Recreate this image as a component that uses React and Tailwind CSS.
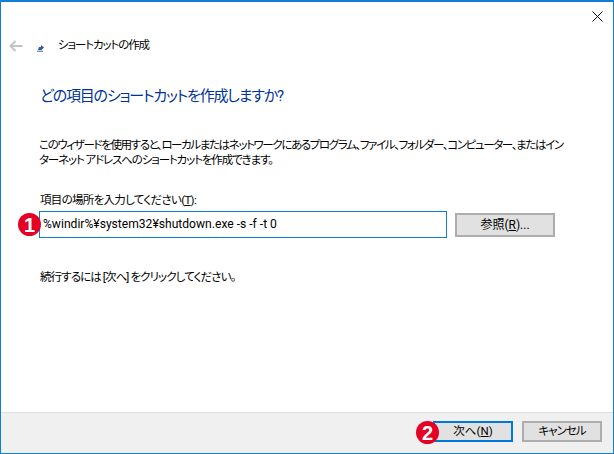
function Badge({ n, className }) {
  return (
    <span className={"absolute flex h-[23px] w-[23px] items-center justify-center rounded-full bg-[#e60023] font-['Liberation_Sans',sans-serif] text-[20px] font-bold leading-none text-white " + className}>
      {n}
    </span>
  );
}

export default function App() {
  return (
    <div className="flex h-[454px] w-[614px] flex-col overflow-hidden border border-t-2 border-[#0f7fd6] bg-white font-['Roboto','Noto_Sans_CJK_JP',sans-serif] text-[11.500px] text-black [font-feature-settings:'palt']">
      <div className="flex h-[28px] shrink-0 items-center justify-end pr-[10px]">
        <svg width="11" height="11" viewBox="0 0 11 11" className="mt-[1px]">
          <path d="M.5.5l10 10M10.500.5l-10 10" stroke="#111" strokeWidth="1" fill="none" />
        </svg>
      </div>
      <div className="flex h-[32px] shrink-0 items-center pl-[8px]">
        <svg width="14" height="12" viewBox="0 0 14 12">
          <path d="M1 6h12.500M6.500 1L1.500 6l5 5" stroke="#c4c4c4" strokeWidth="2" fill="none" />
        </svg>
        <svg width="7" height="7" viewBox="0 0 7 7" className="ml-[14px] mt-[5px]">
          <rect x="0" y="5.500" width="6" height="1.500" fill="#8a9bb0" />
          <path d="M1 5L2 2h2V0l3 2.500L4.500 5z" fill="#2a5ea8" />
        </svg>
        <span className="ml-[14px] leading-none tracking-[-1.1px]">ショートカットの作成</span>
      </div>
      <div className="flex flex-1 flex-col pl-[38px]">
        <h1 className="ml-[1px] mt-[22px] text-[15px] font-normal leading-[24px] tracking-[-1.2px] text-[#003399]">どの項目のショートカットを作成しますか?</h1>
        <div className="mt-[30px] flex flex-col whitespace-nowrap leading-[15px]">
          <p className="tracking-[-1.37px]">このウィザードを使用すると、ローカルまたはネットワークにあるプログラム、ファイル、フォルダー、コンピューター、またはイン</p>
          <p className="tracking-[-1.12px]">ターネット アドレスへのショートカットを作成できます。</p>
        </div>
        <label className="ml-[1px] mt-[25px] leading-[15px] tracking-[-0.7px]">項目の場所を入力してください(<u>T</u>):</label>
        <div className="relative mt-[3px] flex items-center">
          <Badge n="1" className="left-[-21px] top-[2px]" />
          <div className="flex h-[27px] w-[408px] items-center border border-[#0f7fd6] pl-[3px] text-[12.100px]">%windir%¥system32¥shutdown.exe -s -f -t 0</div>
          <button className="ml-[8px] h-[24px] w-[100px] border-2 border-[#adadad] bg-[#e1e1e1] text-[12px] leading-none">参照(<u>R</u>)...</button>
        </div>
        <p className="ml-[1px] mt-[32px] leading-[15px] tracking-[-0.9px]">続行するには [次へ] をクリックしてください。</p>
      </div>
      <div className="relative flex h-[41px] shrink-0 items-start justify-end gap-[9px] border-t border-[#dfdfdf] bg-[#f0f0f0] pr-[11px] pt-[8px]">
        <Badge n="2" className="left-[415px] top-[8px]" />
        <button className="h-[21px] w-[80px] border-2 border-[#0078d7] bg-[#e1e1e1] leading-none">次へ(<u>N</u>)</button>
        <button className="h-[21px] w-[80px] border-2 border-[#adadad] bg-[#e1e1e1] leading-none tracking-[-1px]">キャンセル</button>
      </div>
    </div>
  );
}
